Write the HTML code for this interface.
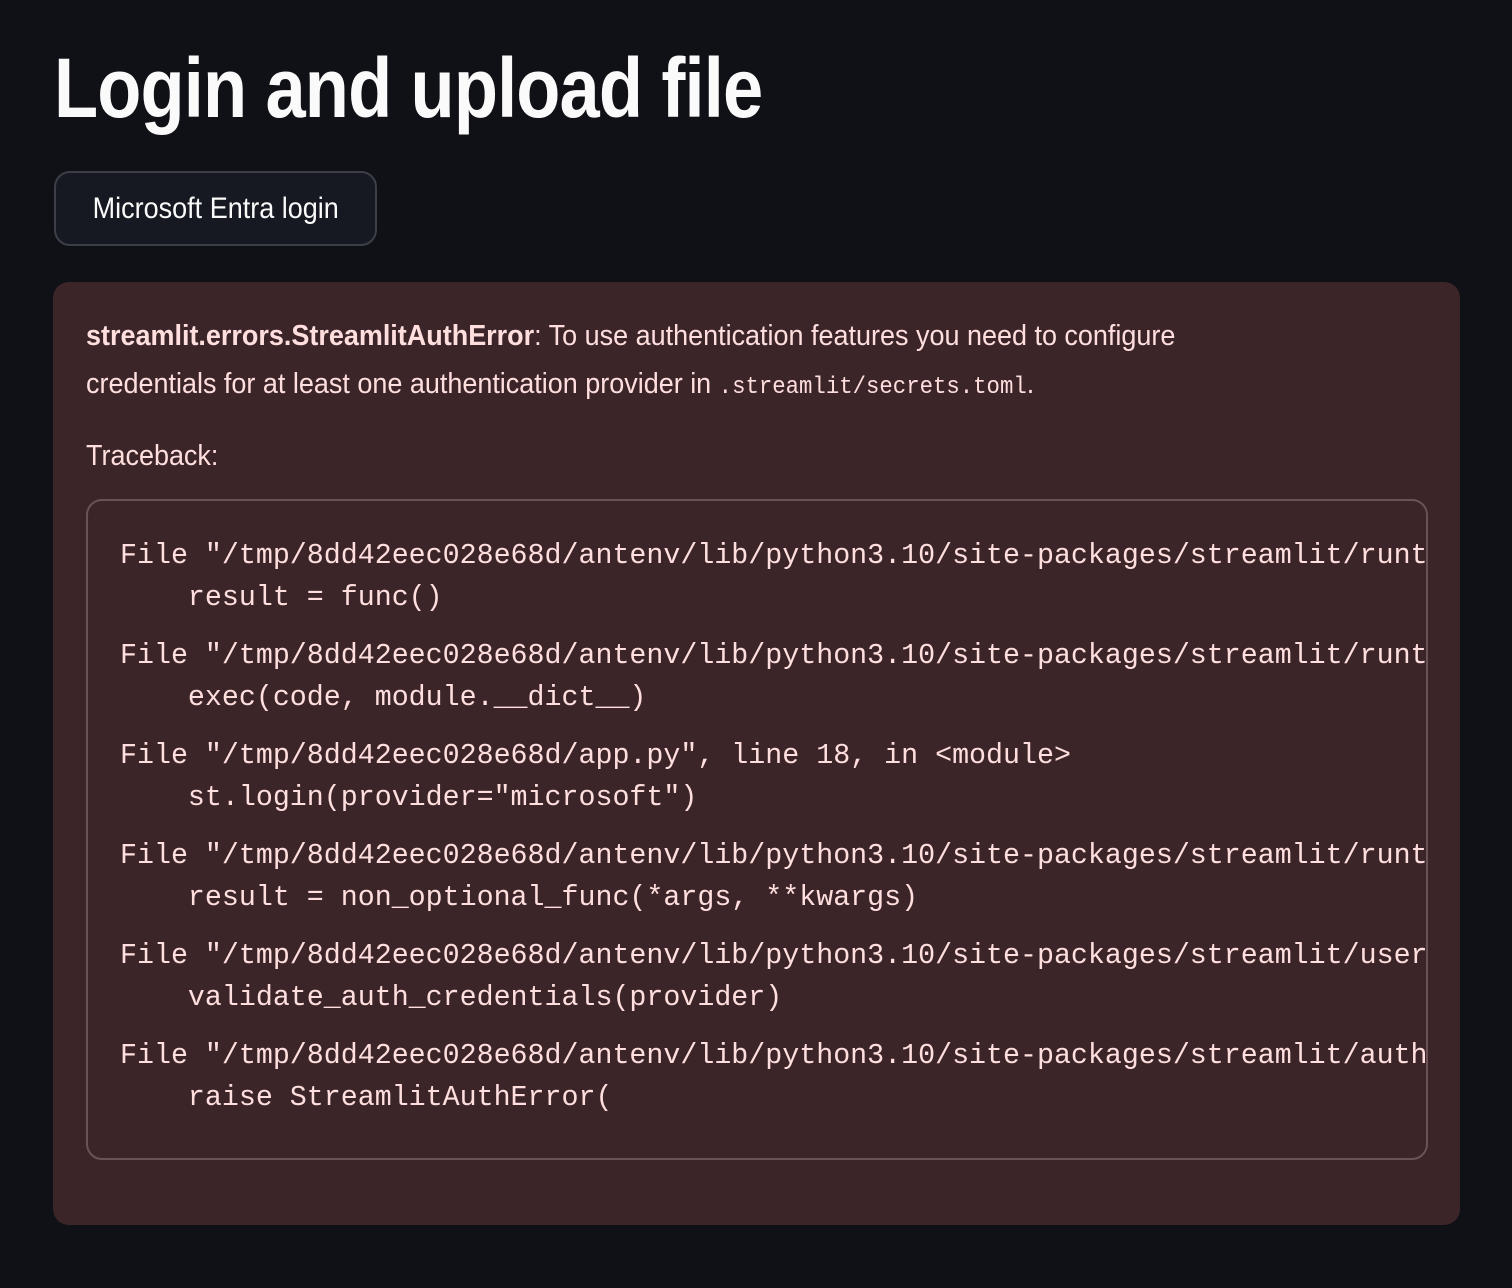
<!DOCTYPE html>
<html><head><meta charset="utf-8"><style>
html,body{margin:0;padding:0;background:#0f1117;width:1512px;height:1288px;overflow:hidden}
body{font-family:"Liberation Sans",sans-serif;color:#fafafa;position:relative}
h1{position:absolute;left:54px;top:38px;margin:0;font-size:84px;line-height:100px;font-weight:700;letter-spacing:-1px;transform:scaleX(0.86);transform-origin:left top;white-space:nowrap;color:#fafafa}
.btn{position:absolute;left:54px;top:171px;width:323px;height:75px;box-sizing:border-box;border:2px solid #3c3f48;border-radius:16px;background:#161922;color:#fafafa;font-size:30px;line-height:71px;text-align:center;white-space:nowrap}
.btn span{display:inline-block;transform:scaleX(0.9)}
.err{position:absolute;left:53px;top:282px;width:1407px;height:943px;background:#3c2529;border-radius:16px;color:#ffdede}
.msg{position:absolute;left:33px;white-space:nowrap;font-size:29px;transform:scaleX(0.93);transform-origin:left top}
.m1{top:38px}.m2{top:86px}.m3{top:158px}
.ic{font-family:"Liberation Mono",monospace;font-size:24px}
.code{position:absolute;left:33px;top:217px;width:1342px;height:661px;box-sizing:border-box;border:2px solid #6a5256;border-radius:16px;overflow:hidden}
.code pre{margin:0;position:absolute;left:32px;top:34px;font-family:"Liberation Mono",monospace;font-size:28.3px;line-height:42px;color:#ffdede;white-space:pre}
.e{margin-bottom:16px}
</style></head><body>
<h1>Login and upload file</h1>
<div class="btn"><span>Microsoft Entra login</span></div>
<div class="err">
<div class="msg m1"><b>streamlit.errors.StreamlitAuthError</b>: To use authentication features you need to configure</div>
<div class="msg m2">credentials for at least one authentication provider in <span class="ic">.streamlit/secrets.toml</span>.</div>
<div class="msg m3">Traceback:</div>
<div class="code"><pre><div class="e">File "/tmp/8dd42eec028e68d/antenv/lib/python3.10/site-packages/streamlit/runtime/scriptrunner/exec_code.py", line 121
    result = func()</div><div class="e">File "/tmp/8dd42eec028e68d/antenv/lib/python3.10/site-packages/streamlit/runtime/scriptrunner/script_runner.py"
    exec(code, module.__dict__)</div><div class="e">File "/tmp/8dd42eec028e68d/app.py", line 18, in &lt;module&gt;
    st.login(provider="microsoft")</div><div class="e">File "/tmp/8dd42eec028e68d/antenv/lib/python3.10/site-packages/streamlit/runtime/metrics_util.py", line 410
    result = non_optional_func(*args, **kwargs)</div><div class="e">File "/tmp/8dd42eec028e68d/antenv/lib/python3.10/site-packages/streamlit/user_info.py", line 109
    validate_auth_credentials(provider)</div><div class="e">File "/tmp/8dd42eec028e68d/antenv/lib/python3.10/site-packages/streamlit/auth_util.py", line 159
    raise StreamlitAuthError(</div></pre></div>
</div>
</body></html>
